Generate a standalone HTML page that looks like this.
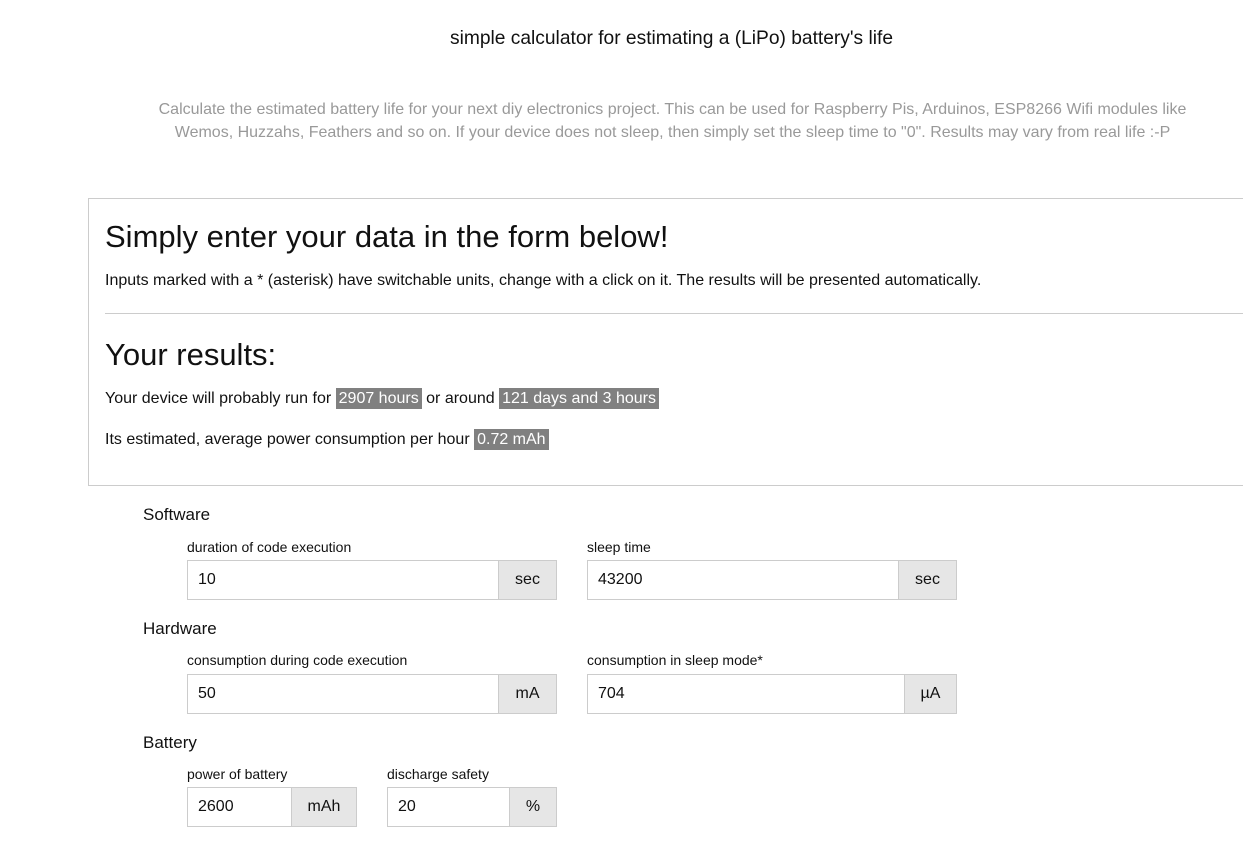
<!DOCTYPE html>
<html><head><meta charset="utf-8"><style>
*{margin:0;padding:0;box-sizing:border-box}
body{width:1243px;height:842px;overflow:hidden;background:#fff;font-family:"Liberation Sans",Arial,sans-serif;color:#111;position:relative}
.a{position:absolute;white-space:nowrap}
.title{left:0;width:1343px;text-align:center;top:28px;font-size:19.2px;line-height:22px;color:#111}
.desc{left:150px;width:1045px;text-align:center;top:99px;font-size:16px;line-height:22.5px;color:#999;white-space:normal}
.box{position:absolute;left:88px;top:198px;width:1200px;height:288px;border:1px solid #ccc;border-right:none}
.h1{font-size:31px;line-height:38px;left:105px}
.p{font-size:16px;line-height:22px;left:105px}
.hr{position:absolute;left:105px;top:313px;width:1140px;height:1px;background:#ccc}
.bd{background:#808080;color:#fff;padding:2px 3px}
.sec{font-size:17px;line-height:20px;left:143px}
.lbl{font-size:14px;line-height:18px}
.in{position:absolute;height:40px;border:1px solid #ccc;background:#fff;font-size:16px;line-height:38px;padding-left:10px}
.ad{position:absolute;top:-1px;right:-1px;height:40px;border:1px solid #ccc;background:#e6e6e6;text-align:center;line-height:38px;font-size:16px}
</style></head><body>
<div class="a title">simple calculator for estimating a (LiPo) battery's life</div>
<div class="a desc">Calculate the estimated battery life for your next diy electronics project. This can be used for Raspberry Pis, Arduinos, ESP8266 Wifi modules like Wemos, Huzzahs, Feathers and so on. If your device does not sleep, then simply set the sleep time to "0". Results may vary from real life :-P</div>
<div class="box"></div>
<div class="a h1" style="top:218px">Simply enter your data in the form below!</div>
<div class="a p" style="top:270px">Inputs marked with a * (asterisk) have switchable units, change with a click on it. The results will be presented automatically.</div>
<div class="hr"></div>
<div class="a h1" style="top:336px">Your results:</div>
<div class="a p" style="top:388px">Your device will probably run for <span class="bd">2907 hours</span> or around <span class="bd">121 days and 3 hours</span></div>
<div class="a p" style="top:429px">Its estimated, average power consumption per hour <span class="bd">0.72 mAh</span></div>

<div class="a sec" style="top:505px">Software</div>
<div class="a lbl" style="left:187px;top:538px">duration of code execution</div>
<div class="in" style="left:187px;top:560px;width:370px">10<div class="ad" style="width:59px">sec</div></div>
<div class="a lbl" style="left:587px;top:538px">sleep time</div>
<div class="in" style="left:587px;top:560px;width:370px">43200<div class="ad" style="width:59px">sec</div></div>

<div class="a sec" style="top:619px">Hardware</div>
<div class="a lbl" style="left:187px;top:651px">consumption during code execution</div>
<div class="in" style="left:187px;top:674px;width:370px">50<div class="ad" style="width:59px">mA</div></div>
<div class="a lbl" style="left:587px;top:651px">consumption in sleep mode*</div>
<div class="in" style="left:587px;top:674px;width:370px">704<div class="ad" style="width:53px">µA</div></div>

<div class="a sec" style="top:733px">Battery</div>
<div class="a lbl" style="left:187px;top:765px">power of battery</div>
<div class="in" style="left:187px;top:787px;width:170px">2600<div class="ad" style="width:66px">mAh</div></div>
<div class="a lbl" style="left:387px;top:765px">discharge safety</div>
<div class="in" style="left:387px;top:787px;width:170px">20<div class="ad" style="width:48px">%</div></div>
</body></html>
